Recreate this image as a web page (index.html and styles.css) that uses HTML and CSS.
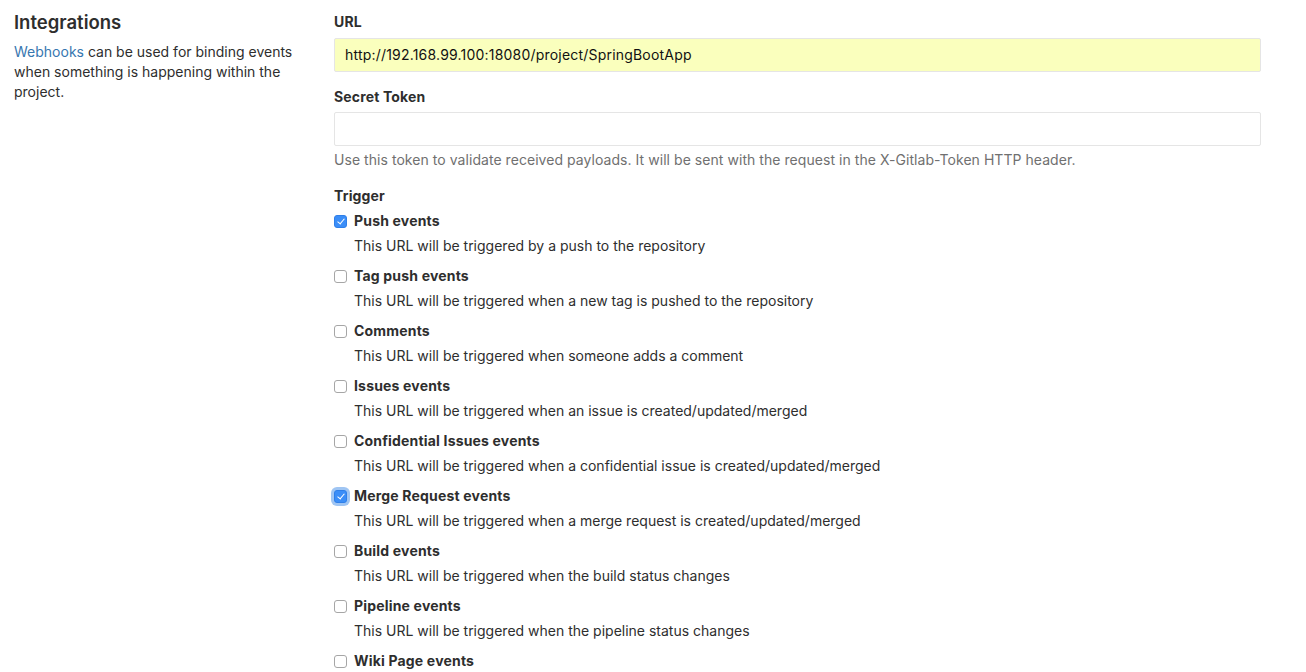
FILE: index.html
```html
<!DOCTYPE html>
<html>
<head>
<meta charset="utf-8">
<link rel="stylesheet" href="styles.css">
</head>
<body>
<div class="page">
  <div class="side">
    <h4 class="side-title">Integrations</h4>
    <p class="side-text"><a class="link" href="#">Webhooks</a> can be used for binding events when something is happening within the project.</p>
  </div>
  <div class="main">
    <div class="field">
      <div class="label">URL</div>
      <div class="input autofill">http://192.168.99.100:18080/project/SpringBootApp</div>
    </div>
    <div class="field">
      <div class="label">Secret Token</div>
      <div class="input"></div>
      <div class="help">Use this token to validate received payloads. It will be sent with the request in the X-Gitlab-Token HTTP header.</div>
    </div>
    <div class="label trigger-label">Trigger</div>
    <ul class="triggers">
      <li class="trigger">
        <div class="trigger-head"><span class="cb checked"></span><span class="trigger-name">Push events</span></div>
        <div class="trigger-desc">This URL will be triggered by a push to the repository</div>
      </li>
      <li class="trigger">
        <div class="trigger-head"><span class="cb"></span><span class="trigger-name">Tag push events</span></div>
        <div class="trigger-desc">This URL will be triggered when a new tag is pushed to the repository</div>
      </li>
      <li class="trigger">
        <div class="trigger-head"><span class="cb"></span><span class="trigger-name">Comments</span></div>
        <div class="trigger-desc">This URL will be triggered when someone adds a comment</div>
      </li>
      <li class="trigger">
        <div class="trigger-head"><span class="cb"></span><span class="trigger-name">Issues events</span></div>
        <div class="trigger-desc">This URL will be triggered when an issue is created/updated/merged</div>
      </li>
      <li class="trigger">
        <div class="trigger-head"><span class="cb"></span><span class="trigger-name">Confidential Issues events</span></div>
        <div class="trigger-desc">This URL will be triggered when a confidential issue is created/updated/merged</div>
      </li>
      <li class="trigger">
        <div class="trigger-head"><span class="cb checked focused"></span><span class="trigger-name">Merge Request events</span></div>
        <div class="trigger-desc">This URL will be triggered when a merge request is created/updated/merged</div>
      </li>
      <li class="trigger">
        <div class="trigger-head"><span class="cb"></span><span class="trigger-name">Build events</span></div>
        <div class="trigger-desc">This URL will be triggered when the build status changes</div>
      </li>
      <li class="trigger">
        <div class="trigger-head"><span class="cb"></span><span class="trigger-name">Pipeline events</span></div>
        <div class="trigger-desc">This URL will be triggered when the pipeline status changes</div>
      </li>
      <li class="trigger">
        <div class="trigger-head"><span class="cb"></span><span class="trigger-name">Wiki Page events</span></div>
        <div class="trigger-desc">This URL will be triggered when a wiki page is created/updated</div>
      </li>
    </ul>
  </div>
</div>
</body>
</html>
```
FILE: styles.css
```css
html, body {
  margin: 0;
  padding: 0;
  background: #fff;
}
body {
  font-family: Inter, "Liberation Sans", Arial, sans-serif;
  font-size: 14px;
  line-height: 20px;
  color: #2e2e2e;
  overflow: hidden;
  height: 672px;
}
.page {
  display: flex;
  padding: 12px 0 0 14px;
}
.side {
  width: 320px;
  flex: none;
}
.side-title {
  margin: 0 0 10px;
  font-size: 18.5px;
  line-height: 20px;
  font-weight: 600;
  color: #2e2e2e;
}
.side-text {
  margin: 0;
  width: 290px;
}
.link {
  color: #3777b0;
  text-decoration: none;
}
.main {
  width: 927px;
  flex: none;
}
.label {
  font-weight: 700;
  line-height: 20px;
  letter-spacing: 0.15px;
}
.field .label {
  margin-bottom: 6px;
}
.field + .field .label {
  margin-bottom: 5px;
}
.input {
  box-sizing: border-box;
  height: 34px;
  border: 1px solid #e5e5e5;
  border-radius: 2px;
  padding: 6px 10px;
  line-height: 20px;
  color: #111;
  background: #fff;
  letter-spacing: 0.2px;
}
.field {
  margin-bottom: 15px;
}
.field + .field {
  margin-bottom: 0;
}
.input.autofill {
  background: #faffbd;
}
.help {
  margin-top: 4px;
  color: #707070;
  letter-spacing: 0.05px;
}
.trigger-label {
  margin-top: 16px;
  margin-bottom: 5px;
}
.triggers {
  list-style: none;
  margin: 0;
  padding: 0;
}
.trigger {
  margin-bottom: 10px;
}
.trigger-head {
  display: flex;
  align-items: center;
  height: 20px;
}
.trigger-name {
  font-weight: 700;
  letter-spacing: 0.18px;
}
.cb {
  box-sizing: border-box;
  width: 13px;
  height: 13px;
  border: 1px solid #a6a6a6;
  border-radius: 3px;
  background: #fff;
  margin-right: 7px;
  flex: none;
  position: relative;
}
.cb.checked {
  background: #3b8ef8;
  border-color: #2f7fe8;
}
.cb.checked::after {
  content: "";
  position: absolute;
  left: 3.5px;
  top: 1px;
  width: 3px;
  height: 6px;
  border: solid #fff;
  border-width: 0 1.5px 1.5px 0;
  transform: rotate(40deg);
}
.cb.focused {
  box-shadow: 0 0 0 3px #9fc5f3;
}
.trigger-desc {
  margin-top: 5px;
  padding-left: 20px;
}
```
